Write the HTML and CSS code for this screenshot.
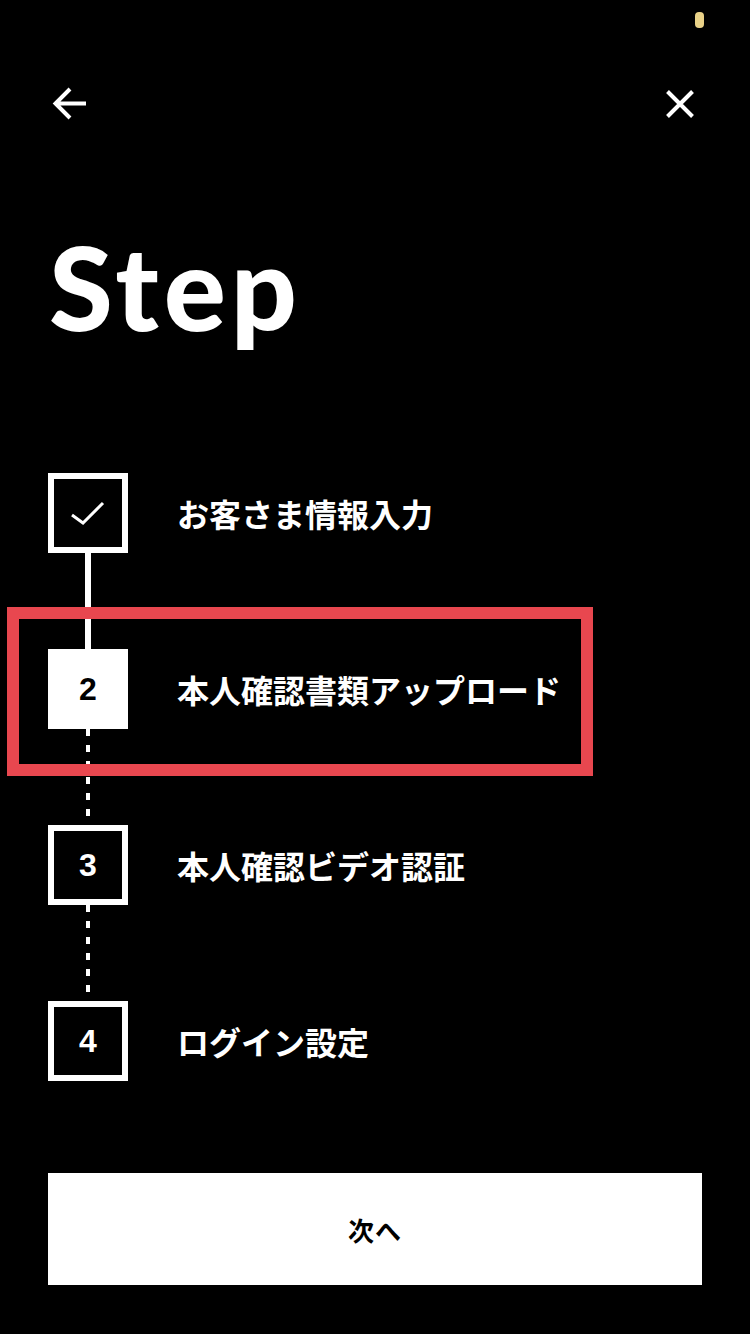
FILE: index.html
```html
<!DOCTYPE html>
<html lang="ja">
<head>
<meta charset="utf-8">
<title>Step</title>
<link rel="stylesheet" href="styles.css">
</head>
<body>
<div class="screen">
  <span class="status-dot"></span>
  <header class="topbar">
    <button class="icon-btn" aria-label="戻る">
      <svg viewBox="0 0 44 44" width="44" height="44"><path d="M7 21.5H38M22 7L7.5 21.5L22 36" fill="none" stroke="#fff" stroke-width="4" stroke-linejoin="miter"/></svg>
    </button>
    <button class="icon-btn" aria-label="閉じる">
      <svg viewBox="0 0 44 44" width="44" height="44"><path d="M9.5 9.5L34.5 34.5M34.5 9.5L9.5 34.5" fill="none" stroke="#fff" stroke-width="4"/></svg>
    </button>
  </header>

  <h1 class="title">Step</h1>

  <ol class="steps">
    <li class="step">
      <span class="box">
        <svg viewBox="0 0 68 68" width="68" height="68"><path d="M18 36L29 44L49 24" fill="none" stroke="#fff" stroke-width="3"/></svg>
      </span>
      <span class="label">お客さま情報入力</span>
    </li>
    <li class="connector solid"></li>
    <li class="step current">
      <span class="box filled">2</span>
      <span class="label">本人確認書類アップロード</span>
    </li>
    <li class="connector dashed"></li>
    <li class="step">
      <span class="box">3</span>
      <span class="label">本人確認ビデオ認証</span>
    </li>
    <li class="connector dashed"></li>
    <li class="step">
      <span class="box">4</span>
      <span class="label">ログイン設定</span>
    </li>
  </ol>

  <span class="highlight"></span>

  <button class="next-btn">次へ</button>
</div>
</body>
</html>
```

FILE: styles.css
```css
* { box-sizing: border-box; }
html, body {
  margin: 0;
  padding: 0;
  background: #000;
}
body {
  width: 750px;
  height: 1334px;
  overflow: hidden;
  font-family: "Noto Sans CJK JP", "Noto Sans", sans-serif;
  color: #fff;
}
.screen {
  position: relative;
  width: 750px;
  height: 1334px;
  padding: 0 48px;
}
.status-dot {
  position: absolute;
  left: 695px;
  top: 12px;
  width: 9px;
  height: 16px;
  border-radius: 4px;
  background: #e9d187;
}
.topbar {
  display: flex;
  justify-content: space-between;
  padding-top: 82px;
}
.icon-btn {
  width: 44px;
  height: 44px;
  padding: 0;
  border: 0;
  background: none;
  display: block;
}
.icon-btn svg { display: block; }
.title {
  margin: 103px 0 0 0;
  padding-left: 1px;
  font-family: "Lato", "Liberation Sans", sans-serif;
  font-weight: 900;
  font-size: 116px;
  line-height: 116px;
  height: 116px;
  letter-spacing: 5px;
}
.steps {
  list-style: none;
  margin: 128px 0 0 0;
  padding: 0;
  display: flex;
  flex-direction: column;
}
.step {
  display: flex;
  align-items: center;
  gap: 49px;
  height: 80px;
}
.box {
  flex: 0 0 80px;
  width: 80px;
  height: 80px;
  border: 6px solid #fff;
  display: flex;
  align-items: center;
  justify-content: center;
  font-family: "Liberation Sans", "Arial", sans-serif;
  font-weight: 700;
  font-size: 32px;
  color: #fff;
}
.box svg { display: block; }
.box.filled {
  background: #fff;
  color: #000;
}
.label {
  font-size: 32px;
  font-weight: 700;
  line-height: 1;
  color: #fff;
}
.connector {
  height: 96px;
  margin-left: 40px;
  transform: translateX(-50%);
}
.connector.solid {
  width: 6px;
  background: #fff;
}
.connector.dashed {
  width: 4px;
  background: repeating-linear-gradient(to bottom, #fff 0, #fff 7.5px, transparent 7.5px, transparent 16px);
}
.highlight {
  position: absolute;
  left: 7px;
  top: 607px;
  width: 586px;
  height: 169px;
  border: 12px solid #e8474f;
  pointer-events: none;
}
.next-btn {
  display: block;
  width: 654px;
  height: 112px;
  margin-top: 92px;
  border: 0;
  background: #fff;
  color: #000;
  font-family: "Noto Sans CJK JP", sans-serif;
  font-weight: 700;
  font-size: 26px;
  letter-spacing: 1px;
  padding: 0;
}
```
